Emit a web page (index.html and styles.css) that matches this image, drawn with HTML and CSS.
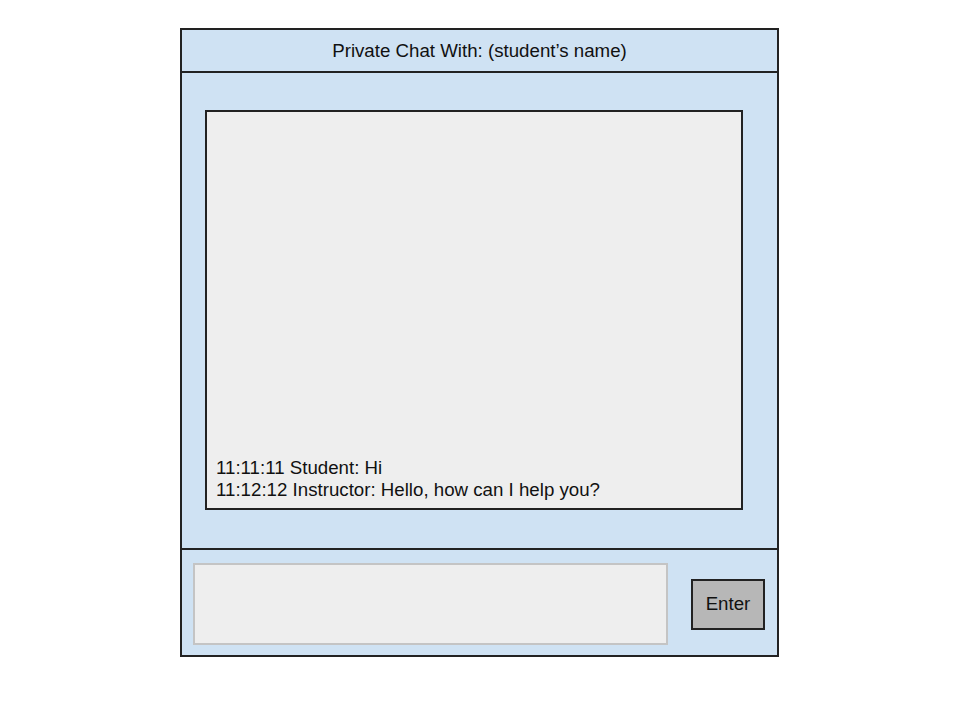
FILE: index.html
```html
<!DOCTYPE html>
<html>
<head>
<meta charset="utf-8">
<link rel="stylesheet" href="styles.css">
</head>
<body>
<div class="frame">
  <div class="header">Private Chat With: (student’s name)</div>
  <div class="main">
    <div class="log">
      <div class="msg">11:11:11 Student: Hi</div>
      <div class="msg">11:12:12 Instructor: Hello, how can I help you?</div>
    </div>
  </div>
  <div class="footer">
    <div class="input"></div>
    <div class="btn">Enter</div>
  </div>
</div>
</body>
</html>
```

FILE: styles.css
```css
html, body {
  margin: 0;
  padding: 0;
  background: #ffffff;
}
body {
  font-family: "Liberation Sans", Arial, sans-serif;
  color: #111;
  padding: 28px 0 0 180px;
}
.frame {
  box-sizing: border-box;
  width: 599px;
  border: 2px solid #222;
  background: #cfe2f3;
  display: flex;
  flex-direction: column;
}
.header {
  box-sizing: border-box;
  height: 43px;
  border-bottom: 2px solid #222;
  display: flex;
  align-items: center;
  justify-content: center;
  font-size: 18.7px;
}
.main {
  padding: 37px 34px 38px 23px;
}
.log {
  box-sizing: border-box;
  height: 400px;
  border: 2px solid #222;
  background: #eeeeee;
  display: flex;
  flex-direction: column;
  justify-content: flex-end;
  padding: 0 8px 7px 9px;
  font-size: 18.7px;
  line-height: 22px;
}
.footer {
  border-top: 2px solid #222;
  display: flex;
  align-items: center;
  padding: 13px 12px 10px 11px;
}
.input {
  box-sizing: border-box;
  width: 475px;
  height: 82px;
  border: 2px solid #c4c4c4;
  background: #eeeeee;
}
.btn {
  box-sizing: border-box;
  margin-left: 23px;
  width: 74px;
  height: 51px;
  border: 2px solid #222;
  background: #b7b7b7;
  display: flex;
  align-items: center;
  justify-content: center;
  font-size: 18.7px;
}
```
